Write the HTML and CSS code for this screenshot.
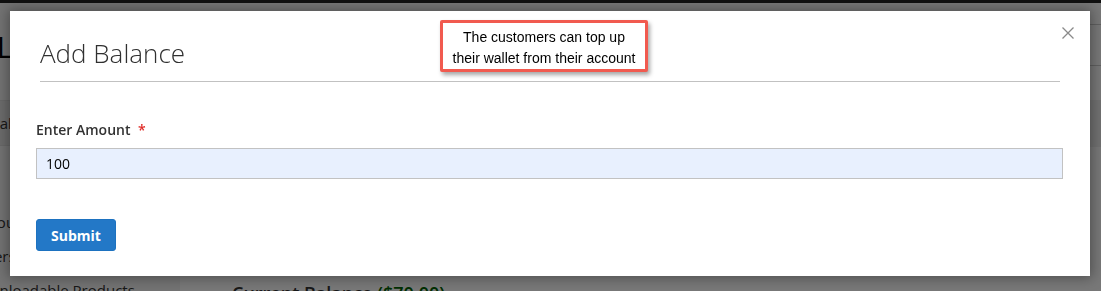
FILE: index.html
```html
<!DOCTYPE html>
<html>
<head>
<meta charset="utf-8">
<link rel="stylesheet" href="styles.css">
</head>
<body>
<div class="page">
  <div class="topbar"></div>
  <div class="page-body">
    <aside class="sidebar">
      <div class="page-title">WALLET</div>
      <ul class="nav">
        <li class="nav-item active">Balance</li>
        <li class="nav-item spacer">Account Dashboard</li>
        <li class="nav-item">My Orders</li>
        <li class="nav-item">My Downloadable Products</li>
      </ul>
    </aside>
    <main class="content">
      <div class="tabs"></div>
      <div class="tab-row"></div>
      <div class="strip"></div>
      <div class="balance">Current Balance <span class="amount">($70.00)</span></div>
    </main>
  </div>
</div>
<div class="overlay"></div>
<div class="modal">
  <header class="modal-header">
    <h1 class="modal-title">Add Balance</h1>
    <button class="close" aria-label="Close">
      <svg width="12" height="12" viewBox="0 0 12 12"><path d="M0.5 0.5 L11.5 11.5 M11.5 0.5 L0.5 11.5" stroke="#8a8a8a" stroke-width="1.3" fill="none"/></svg>
    </button>
  </header>
  <form class="modal-body">
    <label class="field-label">Enter Amount <span class="req">*</span></label>
    <input class="field-input" type="text" value="100">
    <button class="submit" type="button">Submit</button>
  </form>
</div>
<div class="callout">The customers can top up<br>their wallet from their account</div>
</body>
</html>
```
FILE: styles.css
```css
html, body {
  margin: 0;
  padding: 0;
  width: 1101px;
  height: 291px;
  overflow: hidden;
  background: #fff;
  font-family: "Open Sans", "Liberation Sans", sans-serif;
}
.page {
  width: 1101px;
  height: 291px;
  overflow: hidden;
}
.topbar {
  height: 3px;
  background: #222;
}
.page-body {
  display: flex;
}
.sidebar {
  width: 180px;
  flex: none;
  background: #f5f5f5;
  height: 288px;
  overflow: hidden;
}
.page-title {
  font-size: 30px;
  font-weight: 400;
  color: #000;
  margin: 19px 0 0 -50px;
  line-height: 50px;
  height: 60px;
  white-space: nowrap;
}
.nav {
  list-style: none;
  margin: 18px 0 0 0;
  padding: 0;
}
.nav-item {
  font-size: 15px;
  color: #333;
  line-height: 34px;
  white-space: nowrap;
}
.nav-item.active {
  background: #e6e6e6;
  text-indent: -10px;
  height: 44px;
  line-height: 44px;
  border-top: 1px solid #ddd;
  border-bottom: 1px solid #ddd;
}
.nav-item.spacer { margin-top: 59px; text-indent: -27px; }
.nav li:nth-child(3) { text-indent: -58px; }
.nav li:nth-child(4) { text-indent: -57px; }
.content {
  flex: 1;
}
.tabs {
  height: 21px;
  border-bottom: 1px solid #ccc;
}
.tab-row {
  height: 40px;
  border-bottom: 1px solid #ccc;
}
.strip {
  margin-top: 34px;
  height: 47px;
  background: #f0f0f0;
}
.balance {
  margin: 134px 0 0 52px;
  font-size: 18px;
  font-weight: 600;
  color: #333;
  line-height: 24px;
}
.amount { color: #006400; }
.overlay {
  position: fixed;
  inset: 0;
  background: rgba(0, 0, 0, 0.53);
}
.modal {
  position: absolute;
  left: 10px;
  top: 11px;
  width: 1080px;
  height: 265px;
  background: #fff;
  box-shadow: 0 0 12px 2px rgba(0, 0, 0, 0.35);
  box-sizing: border-box;
}
.modal-header {
  margin: 0 30px;
  padding: 27px 0 12px;
  border-bottom: 1px solid #c1c1c1;
  position: relative;
}
.modal-title {
  margin: 0;
  font-size: 26px;
  font-weight: 300;
  line-height: 31px;
  color: #303030;
}
.close {
  position: absolute;
  right: -14px;
  top: 16px;
  width: 12px;
  height: 12px;
  padding: 0;
  border: 0;
  background: none;
  display: block;
}
.close svg { display: block; }
.modal-body {
  display: flex;
  flex-direction: column;
  align-items: flex-start;
  padding: 38px 27px 0 26px;
  margin: 0;
}
.field-label {
  font-size: 14px;
  font-weight: 600;
  color: #333;
  line-height: 20px;
}
.req {
  color: #e02b27;
  margin-left: 4px;
}
.field-input {
  margin-top: 8px;
  width: 100%;
  box-sizing: border-box;
  height: 31px;
  border: 1px solid #c2c2c2;
  background: #e8f0fe;
  padding: 0 9px;
  font-family: "Open Sans", "Liberation Sans", sans-serif;
  font-size: 14px;
  color: #000;
  outline: none;
}
.submit {
  margin-top: 40px;
  width: 80px;
  height: 32px;
  background: #2378c7;
  border: 1px solid #1d72c0;
  border-radius: 3px;
  color: #fff;
  font-family: "Open Sans", "Liberation Sans", sans-serif;
  font-size: 14px;
  font-weight: 700;
  padding: 0;
}
.callout {
  position: absolute;
  left: 440px;
  top: 20px;
  width: 208px;
  height: 52px;
  box-sizing: border-box;
  border: 3px solid #f15a4f;
  border-radius: 2px;
  background: #fff;
  box-shadow: 2px 3px 4px rgba(0, 0, 0, 0.35);
  font-family: "Liberation Sans", Arial, sans-serif;
  font-size: 14px;
  line-height: 21px;
  color: #000;
  text-align: center;
  padding-top: 4px;
}
```
